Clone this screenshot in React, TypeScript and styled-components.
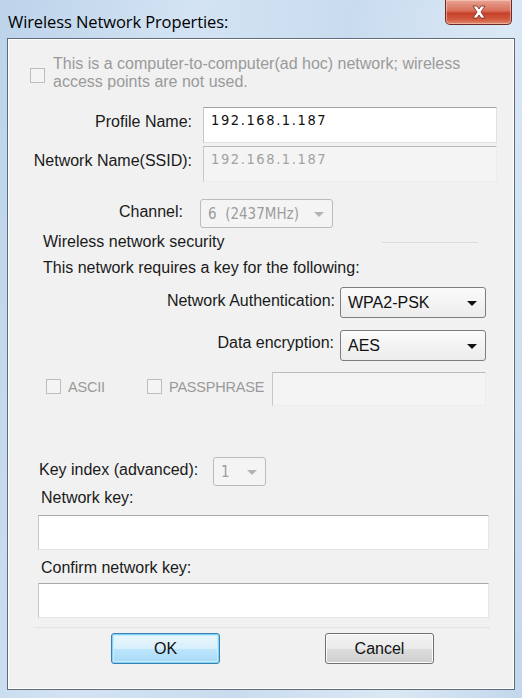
import { styled, createGlobalStyle } from "styled-components";

const GlobalStyle = createGlobalStyle`
  html, body {
    margin: 0;
    padding: 0;
    background: #b9d1ea;
  }
  body {
    font-family: "Liberation Sans", Arial, sans-serif;
  }
`;

export default function App() {
  return (
    <>
      <GlobalStyle />
      <Window>
        <TitleBar>
          <Title>Wireless Network Properties:</Title>
          <CloseButton aria-label="Close">
            <svg width="16" height="14" viewBox="0 0 16 14">
              <path
                d="M2 1 L6 1 L8 4 L10 1 L14 1 L10 7 L14 13 L10 13 L8 10 L6 13 L2 13 L6 7 Z"
                fill="#ffffff"
                stroke="#7a2418"
                strokeWidth="0.8"
              />
            </svg>
          </CloseButton>
        </TitleBar>
        <Client>
          <AdHoc>
            <CheckBox $disabled $mt={13} />
            <GreyText>
              This is a computer-to-computer(ad hoc) network; wireless
              <br />
              access points are not used.
            </GreyText>
          </AdHoc>

          <FieldRow $mt={16} $h={36} $labelWidth={184} $gap={11}>
            <Label $right $top={6}>Profile Name:</Label>
            <TextBox $w={294}>192.168.1.187</TextBox>
          </FieldRow>

          <FieldRow $mt={3} $h={36} $labelWidth={184} $gap={11}>
            <Label $right $top={6}>Network Name(SSID):</Label>
            <ReadOnlyBox $w={294}>192.168.1.187</ReadOnlyBox>
          </FieldRow>

          <FieldRow $mt={17} $h={29} $labelWidth={175} $gap={17}>
            <Label $right $top={4}>Channel:</Label>
            <Combo $w={133} $disabled $digits>
              <span>6&nbsp; (2437MHz)</span>
              <Arrow $disabled />
            </Combo>
          </FieldRow>

          <SectionLine $mt={5}>
            <Text>Wireless network security</Text>
            <FaintRule />
          </SectionLine>
          <Text $mt={8} $ml={35}>
            This network requires a key for the following:
          </Text>

          <FieldRow $mt={10} $h={31} $labelWidth={327} $gap={5}>
            <Label $right $top={5}>Network Authentication:</Label>
            <Combo $w={146}>
              <span>WPA2-PSK</span>
              <Arrow />
            </Combo>
          </FieldRow>

          <FieldRow $mt={12} $h={31} $labelWidth={326} $gap={6}>
            <Label $right $top={4}>Data encryption:</Label>
            <Combo $w={146}>
              <span>AES</span>
              <Arrow />
            </Combo>
          </FieldRow>

          <KeyTypeRow>
            <CheckGroup $w={101}>
              <CheckBox $disabled $mt={7} />
              <GreyText>ASCII</GreyText>
            </CheckGroup>
            <CheckGroup $w={125}>
              <CheckBox $disabled $mt={7} />
              <GreyText>PASSPHRASE</GreyText>
            </CheckGroup>
            <ReadOnlyBox $w={214} />
          </KeyTypeRow>

          <FieldRow $mt={51} $h={29} $labelWidth={174} $gap={0} $ml={31}>
            <Label $top={4}>Key index (advanced):</Label>
            <Combo $w={53} $disabled $digits>
              <span>1</span>
              <Arrow $disabled />
            </Combo>
          </FieldRow>

          <Text $mt={3} $ml={33}>Network key:</Text>
          <WideBox $mt={8} />
          <Text $mt={9} $ml={33}>Confirm network key:</Text>
          <WideBox $mt={6} />

          <Separator />

          <ButtonRow>
            <Button $default>OK</Button>
            <Button>Cancel</Button>
          </ButtonRow>
        </Client>
      </Window>
    </>
  );
}

// Styled-components
const Window = styled.div`
  width: 522px;
  height: 698px;
  box-sizing: border-box;
  display: flex;
  flex-direction: column;
  padding: 0 7px 8px 7px;
  background: linear-gradient(
    100deg,
    #bcd3ea 0%,
    #d3e3f3 30%,
    #c9dcef 55%,
    #dbe8f5 80%,
    #c2d7ec 100%
  );
`;

const TitleBar = styled.div`
  height: 38px;
  display: flex;
  align-items: flex-start;
  justify-content: space-between;
  flex-shrink: 0;
`;

const Title = styled.div`
  margin-top: 10px;
  margin-left: 1px;
  font-family: "Open Sans", "Liberation Sans", sans-serif;
  font-size: 16.5px;
  color: #000;
  letter-spacing: -0.1px;
`;

const CloseButton = styled.div`
  width: 67px;
  height: 25px;
  margin-right: 3px;
  box-sizing: border-box;
  display: flex;
  align-items: center;
  justify-content: center;
  border: 1px solid #6b2b22;
  border-top: none;
  border-radius: 0 0 5px 5px;
  background: linear-gradient(
    180deg,
    #e8a493 0%,
    #d86f5a 45%,
    #c7412a 55%,
    #d1583e 80%,
    #e08a6a 100%
  );
  box-shadow: inset 0 0 0 1px rgba(255, 220, 210, 0.5);
`;

const Client = styled.div`
  flex: 1;
  border: 1px solid #5f6b78;
  background: #f1f1f1;
  display: flex;
  flex-direction: column;
  padding-top: 16px;
  font-size: 16px;
  color: #1a1a1a;
  box-shadow: inset 0 0 0 1px #ffffff;
`;

const AdHoc = styled.div`
  display: flex;
  align-items: flex-start;
  gap: 8px;
  margin-left: 22px;
  height: 36px;
  line-height: 18px;
`;

const CheckBox = styled.div<{ $disabled?: boolean; $mt?: number }>`
  width: 15px;
  height: 15px;
  flex-shrink: 0;
  box-sizing: border-box;
  margin-top: ${(p) => p.$mt ?? 0}px;
  border: 1px solid ${(p) => (p.$disabled ? "#bdbdbd" : "#8e8f8f")};
  background: ${(p) => (p.$disabled ? "#f4f4f4" : "#fff")};
`;

const GreyText = styled.span`
  color: #9a9a9a;
  white-space: nowrap;
`;

const FieldRow = styled.div<{
  $mt: number;
  $h: number;
  $labelWidth: number;
  $gap: number;
  $ml?: number;
}>`
  display: grid;
  grid-template-columns: ${(p) => p.$labelWidth}px auto;
  column-gap: ${(p) => p.$gap}px;
  margin-top: ${(p) => p.$mt}px;
  margin-left: ${(p) => p.$ml ?? 0}px;
  height: ${(p) => p.$h}px;
`;

const Label = styled.span<{ $right?: boolean; $top: number }>`
  text-align: ${(p) => (p.$right ? "right" : "left")};
  padding-top: ${(p) => p.$top}px;
  white-space: nowrap;
`;

const TextBox = styled.div<{ $w: number }>`
  width: ${(p) => p.$w}px;
  box-sizing: border-box;
  height: 100%;
  background: #fff;
  border: 1px solid #dde1e7;
  border-top-color: #9fa3a9;
  border-left-color: #c4c7cc;
  padding: 4px 7px;
  font-family: "DejaVu Sans Condensed", "Liberation Sans", sans-serif;
  font-size: 14.5px;
  letter-spacing: 1.6px;
  color: #111;
`;

const ReadOnlyBox = styled.div<{ $w: number }>`
  width: ${(p) => p.$w}px;
  box-sizing: border-box;
  height: 100%;
  background: #f4f4f4;
  border: 1px solid #ededed;
  border-top-color: #b8bbbf;
  border-left-color: #c6c8cb;
  padding: 4px 7px;
  font-family: "DejaVu Sans Condensed", "Liberation Sans", sans-serif;
  font-size: 14.5px;
  letter-spacing: 1.6px;
  color: #a2a2a2;
`;

const Combo = styled.div<{ $w: number; $disabled?: boolean; $digits?: boolean }>`
  width: ${(p) => p.$w}px;
  box-sizing: border-box;
  height: 100%;
  display: flex;
  align-items: center;
  justify-content: space-between;
  padding: 0 8px 0 7px;
  border: 1px solid ${(p) => (p.$disabled ? "#b8bcbf" : "#7e7e7e")};
  border-radius: 3px;
  background: ${(p) =>
    p.$disabled
      ? "#f4f4f4"
      : "linear-gradient(180deg, #fbfbfb 0%, #f3f3f3 50%, #ececec 100%)"};
  color: ${(p) => (p.$disabled ? "#9c9c9c" : "#111")};
  font-family: ${(p) =>
    p.$digits
      ? '"DejaVu Sans Condensed", "Liberation Sans", sans-serif'
      : '"Liberation Sans", Arial, sans-serif'};
  font-size: ${(p) => (p.$digits ? 15 : 16)}px;
  white-space: nowrap;
`;

const Arrow = styled.span<{ $disabled?: boolean }>`
  width: 0;
  height: 0;
  border-left: 5px solid transparent;
  border-right: 5px solid transparent;
  border-top: 5px solid ${(p) => (p.$disabled ? "#b3b3b3" : "#111")};
  margin-top: 2px;
`;

const SectionLine = styled.div<{ $mt: number }>`
  display: flex;
  align-items: center;
  margin-top: ${(p) => p.$mt}px;
  margin-left: 35px;
  height: 18px;
  line-height: 18px;
`;

const FaintRule = styled.div`
  margin-left: 158px;
  width: 96px;
  height: 1px;
  background: #dcdcdc;
`;

const Text = styled.div<{ $mt?: number; $ml?: number }>`
  margin-top: ${(p) => p.$mt ?? 0}px;
  margin-left: ${(p) => p.$ml ?? 0}px;
  height: 18px;
  line-height: 18px;
  white-space: nowrap;
`;

const KeyTypeRow = styled.div`
  display: flex;
  margin-top: 11px;
  margin-left: 38px;
  height: 34px;
`;

const CheckGroup = styled.div<{ $w: number }>`
  width: ${(p) => p.$w}px;
  display: flex;
  align-items: flex-start;
  gap: 7px;
  line-height: 30px;
  font-size: 14.5px;
  letter-spacing: -0.2px;
`;

const WideBox = styled.div<{ $mt: number }>`
  margin-top: ${(p) => p.$mt}px;
  margin-left: 30px;
  width: 451px;
  height: 35px;
  box-sizing: border-box;
  background: #fff;
  border: 1px solid #e3e6ea;
  border-top-color: #a5a9ae;
  border-left-color: #c4c7cc;
`;

const Separator = styled.div`
  margin-top: 9px;
  margin-left: 27px;
  width: 455px;
  height: 1px;
  background: #e2e2e2;
`;

const ButtonRow = styled.div`
  display: flex;
  margin-top: 5px;
  margin-left: 103px;
  gap: 105px;
`;

const Button = styled.div<{ $default?: boolean }>`
  width: 109px;
  height: 31px;
  box-sizing: border-box;
  display: flex;
  align-items: center;
  justify-content: center;
  border-radius: 3px;
  font-size: 16px;
  color: #111;
  border: 1px solid ${(p) => (p.$default ? "#3c7fb1" : "#707070")};
  background: ${(p) =>
    p.$default
      ? "linear-gradient(180deg, #eaf6fd 0%, #d9f0fc 50%, #bee6fd 51%, #a7d9f5 100%)"
      : "linear-gradient(180deg, #f2f2f2 0%, #ebebeb 50%, #dddddd 51%, #cfcfcf 100%)"};
  box-shadow: ${(p) =>
    p.$default
      ? "inset 0 0 0 1px #7fd3f6, inset 0 0 0 2px #c8ecfb"
      : "inset 0 0 0 1px #fcfcfc"};
`;
